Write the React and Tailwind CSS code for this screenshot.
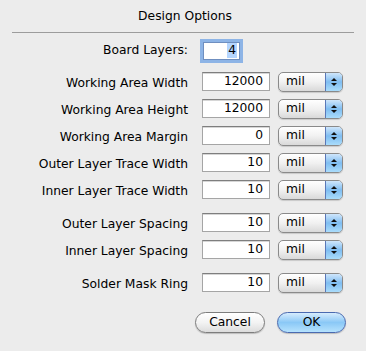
import React from "react";

const rows = [
  { label: "Working Area Width", value: "12000", gap: false },
  { label: "Working Area Height", value: "12000", gap: false },
  { label: "Working Area Margin", value: "0", gap: false },
  { label: "Outer Layer Trace Width", value: "10", gap: false },
  { label: "Inner Layer Trace Width", value: "10", gap: false },
  { label: "Outer Layer Spacing", value: "10", gap: true },
  { label: "Inner Layer Spacing", value: "10", gap: false },
  { label: "Solder Mask Ring", value: "10", gap: true },
];

const UnitPopup = () => (
  <div className="flex h-[20px] w-[65px] overflow-hidden rounded-[5px] border border-[#8a8a8a] bg-gradient-to-b from-white via-[#f1f1f1] to-[#d9d9d9] shadow-[0_1px_1px_rgba(0,0,0,0.15)]">
    <div className="flex flex-1 items-center pl-[7px] text-[12.3px] leading-none text-black">mil</div>
    <div className="flex w-[17px] flex-col items-center justify-center gap-[2px] border-l border-[#5a78b8] bg-gradient-to-b from-[#cfe6fb] via-[#7fbdf1] to-[#a9dcfb]">
      <svg width="6" height="3" viewBox="0 0 6 3">
        <path d="M0 3 L3 0 L6 3 Z" fill="#111" />
      </svg>
      <svg width="6" height="3" viewBox="0 0 6 3">
        <path d="M0 0 L3 3 L6 0 Z" fill="#111" />
      </svg>
    </div>
  </div>
);

const Field = ({ value }) => (
  <div className="flex h-[19px] w-[68px] items-center justify-end border border-[#a5a5a5] border-t-[#7e7e7e] bg-white pr-[6px] text-[12.3px] leading-none text-black shadow-[inset_0_1px_0_#d6d6d6]">
    {value}
  </div>
);

export default function App() {
  return (
    <div
      className="h-[351px] w-[366px] bg-[#ececec] text-black"
      style={{ fontFamily: '"DejaVu Sans", "Noto Sans", sans-serif' }}
    >
      {/* Title */}
      <div className="px-[12px]">
        <div className="flex h-[32px] items-center justify-center pl-[4px] text-[12.3px] leading-none">
          Design Options
        </div>
        <div className="h-px bg-[#9c9c9c]" />
      </div>

      {/* Board Layers */}
      <div className="mt-[8px] flex h-[19px] items-center">
        <div className="w-[188px] text-right text-[12.3px] leading-none">Board Layers:</div>
        <div className="ml-[15px] flex h-[18px] w-[37px] items-center justify-end border border-[#6f8fc0] bg-white pr-[2px] text-[12.3px] leading-none shadow-[0_0_0_3px_#8db4e6]">
          <span className="bg-[#b4d5fe] px-[1px] py-[1px]">4</span>
        </div>
      </div>

      {/* Option rows */}
      <div className="mt-[12px] flex flex-col">
        {rows.map((row, i) => (
          <div
            key={row.label}
            className={`flex h-[19px] items-center ${i === 0 ? "" : row.gap ? "mt-[14px]" : "mt-[8px]"}`}
          >
            <div className="w-[188px] pt-[3px] text-right text-[12.3px] leading-none">{row.label}</div>
            <div className="ml-[14px]">
              <Field value={row.value} />
            </div>
            <div className="ml-[8px]">
              <UnitPopup />
            </div>
          </div>
        ))}
      </div>

      {/* Buttons */}
      <div className="mt-[20px] flex justify-end gap-[12px] pr-[20px]">
        <button className="flex h-[21px] w-[70px] items-center justify-center rounded-full border border-[#7d7d7d] bg-gradient-to-b from-white via-[#f3f3f3] to-[#dcdcdc] text-[12.3px] leading-none text-black shadow-[0_1px_1px_rgba(0,0,0,0.2)]">
          Cancel
        </button>
        <button className="flex h-[21px] w-[69px] items-center justify-center rounded-full border border-[#4a6ab0] bg-gradient-to-b from-[#d6ecfd] via-[#8ac8f6] to-[#b5e2fd] text-[12.3px] leading-none text-black shadow-[0_1px_1px_rgba(0,0,0,0.2)]">
          OK
        </button>
      </div>
    </div>
  );
}
